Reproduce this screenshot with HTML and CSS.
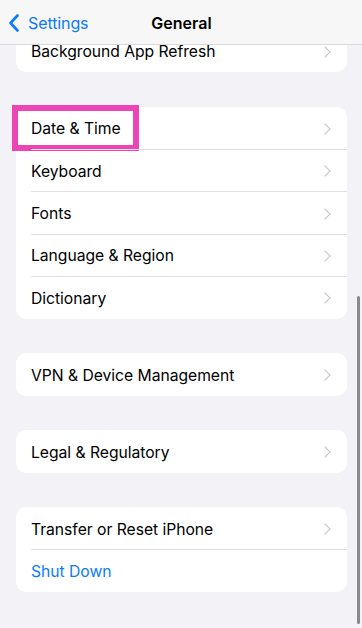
FILE: index.html
```html
<!DOCTYPE html>
<html>
<head>
<meta charset="utf-8">
<link rel="stylesheet" href="styles.css">
</head>
<body>
<header class="nav">
  <div class="back">
    <svg class="back-icon" width="12" height="20" viewBox="0 0 12 20"><path d="M9.5 2.5 L2.5 10 L9.5 17.5" fill="none" stroke="#0A7AFF" stroke-width="2.6" stroke-linecap="round" stroke-linejoin="round"/></svg>
    <span class="back-label">Settings</span>
  </div>
  <div class="title">General</div>
</header>
<main class="content">
  <section class="card">
    <div class="row"><span class="label">Background App Refresh</span><span class="chev"></span></div>
  </section>
  <section class="card">
    <div class="row hl-row"><span class="label">Date &amp; Time</span><span class="chev"></span><span class="highlight"></span></div>
    <div class="row"><span class="label">Keyboard</span><span class="chev"></span></div>
    <div class="row"><span class="label">Fonts</span><span class="chev"></span></div>
    <div class="row"><span class="label">Language &amp; Region</span><span class="chev"></span></div>
    <div class="row"><span class="label">Dictionary</span><span class="chev"></span></div>
  </section>
  <section class="card">
    <div class="row"><span class="label">VPN &amp; Device Management</span><span class="chev"></span></div>
  </section>
  <section class="card">
    <div class="row"><span class="label">Legal &amp; Regulatory</span><span class="chev"></span></div>
  </section>
  <section class="card">
    <div class="row"><span class="label">Transfer or Reset iPhone</span><span class="chev"></span></div>
    <div class="row"><span class="label blue">Shut Down</span></div>
  </section>
</main>
<div class="scrollbar"></div>
</body>
</html>
```

FILE: styles.css
```css
* { box-sizing: border-box; }
html, body {
  margin: 0;
  padding: 0;
  height: 100%;
}
body {
  background: #F2F2F7;
  font-family: Inter, "Noto Sans", sans-serif;
  color: #000;
  overflow: hidden;
  position: relative;
}
.nav {
  position: fixed;
  top: 0;
  left: 0;
  right: 0;
  height: 44.5px;
  background: #F7F7F7;
  border-bottom: 1px solid #D9D9DC;
  display: flex;
  align-items: center;
  justify-content: center;
  z-index: 5;
}
.back {
  position: absolute;
  left: 8px;
  top: 13px;
  display: flex;
  align-items: center;
  gap: 8px;
}
.back-icon { display: block; }
.back-label {
  color: #0A7AFF;
  font-size: 16px;
  letter-spacing: -0.1px;
}
.title {
  font-size: 16px;
  font-weight: 600;
  margin-top: 2px;
  margin-left: 1px;
}
.content {
  padding: 29.6px 15px 0 16px;
  display: flex;
  flex-direction: column;
  gap: 34.6px;
}
.card {
  background: #fff;
  border-radius: 10px;
}
.row {
  position: relative;
  height: 42.4px;
  display: flex;
  align-items: center;
  justify-content: space-between;
  padding: 2px 16px 0 15px;
}
.row + .row::before {
  content: "";
  position: absolute;
  left: 15px;
  right: 0;
  top: 0;
  height: 1px;
  background: #E0E0E4;
}
.label {
  font-size: 15.7px;
  letter-spacing: -0.03px;
}
.blue { color: #0A7AFF; }
.chev {
  width: 8px;
  height: 8px;
  border-top: 1.7px solid #C4C4C7;
  border-right: 1.7px solid #C4C4C7;
  transform: rotate(45deg);
  margin-right: 2px;
}
.highlight {
  position: absolute;
  left: -3.7px;
  top: -2px;
  width: 127px;
  height: 46.6px;
  border: 6px solid #EE45B6;
  pointer-events: none;
}
.scrollbar {
  position: absolute;
  left: 357px;
  top: 296px;
  width: 3px;
  height: 328px;
  border-radius: 2px;
  background: #8A8A8C;
}
```
